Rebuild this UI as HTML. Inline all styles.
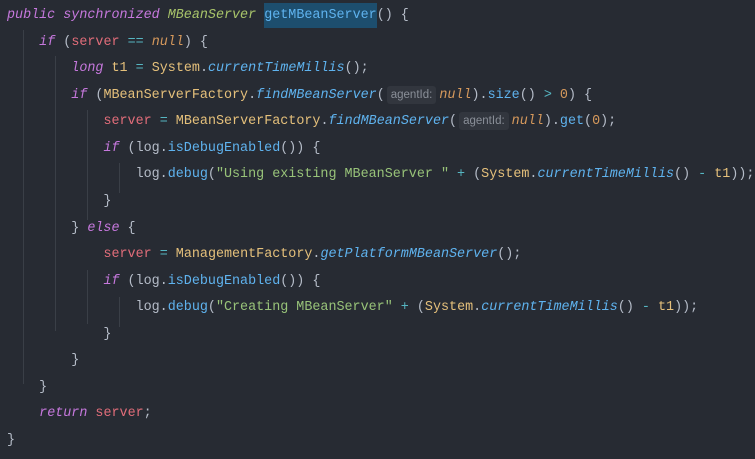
<!DOCTYPE html>
<html><head><style>
body{margin:0;width:755px;height:459px;background:#272b33;overflow:hidden;position:relative}
pre{margin:0;position:absolute;left:7px;top:3px;font-family:"Liberation Mono",monospace;font-size:13.4px;line-height:26.56px;color:#b5bcc8}
.k{color:#c678dd;font-style:italic}
.t{color:#a8c46a;font-style:italic}
.f{color:#5fb3ef}
.fi{color:#5fb3ef;font-style:italic}
.v{color:#e26d7a}
.n{color:#d6995c;font-style:italic}
.c{color:#e5c07b}
.s{color:#98c379}
.o{color:#56b6c2}
.num{color:#d6995c}
.hl{background:#1d4e6e;padding:5px 0}
.h{font-family:"Liberation Sans",sans-serif;font-size:11.5px;line-height:10px;color:#8a8f98;background:#32363e;border-radius:3px;padding:3px 4px;margin:0 3px 0 2px}
.g{position:absolute;width:1px;background:#3a3f47}
</style></head><body>
<div class="g" style="left:23px;top:30px;height:354px"></div>
<div class="g" style="left:55px;top:56px;height:275px"></div>
<div class="g" style="left:87px;top:110px;height:110px"></div>
<div class="g" style="left:87px;top:270px;height:54px"></div>
<div class="g" style="left:119px;top:163px;height:30px"></div>
<div class="g" style="left:119px;top:297px;height:30px"></div>
<pre><span class="k">public synchronized</span> <span class="t">MBeanServer</span> <span class="f hl">getMBeanServer</span>() {
    <span class="k">if</span> (<span class="v">server</span> <span class="o">==</span> <span class="n">null</span>) {
        <span class="k">long</span> <span class="c">t1</span> <span class="o">=</span> <span class="c">System</span>.<span class="fi">currentTimeMillis</span>();
        <span class="k">if</span> (<span class="c">MBeanServerFactory</span>.<span class="fi">findMBeanServer</span>(<span class="h">agentId:</span><span class="n">null</span>).<span class="f">size</span>() <span class="o">&gt;</span> <span class="num">0</span>) {
            <span class="v">server</span> <span class="o">=</span> <span class="c">MBeanServerFactory</span>.<span class="fi">findMBeanServer</span>(<span class="h">agentId:</span><span class="n">null</span>).<span class="f">get</span>(<span class="num">0</span>);
            <span class="k">if</span> (log.<span class="f">isDebugEnabled</span>()) {
                log.<span class="f">debug</span>(<span class="s">"Using existing MBeanServer "</span> <span class="o">+</span> (<span class="c">System</span>.<span class="fi">currentTimeMillis</span>() <span class="o">-</span> <span class="c">t1</span>));
            }
        } <span class="k">else</span> {
            <span class="v">server</span> <span class="o">=</span> <span class="c">ManagementFactory</span>.<span class="fi">getPlatformMBeanServer</span>();
            <span class="k">if</span> (log.<span class="f">isDebugEnabled</span>()) {
                log.<span class="f">debug</span>(<span class="s">"Creating MBeanServer"</span> <span class="o">+</span> (<span class="c">System</span>.<span class="fi">currentTimeMillis</span>() <span class="o">-</span> <span class="c">t1</span>));
            }
        }
    }
    <span class="k">return</span> <span class="v">server</span>;
}</pre>
</body></html>
